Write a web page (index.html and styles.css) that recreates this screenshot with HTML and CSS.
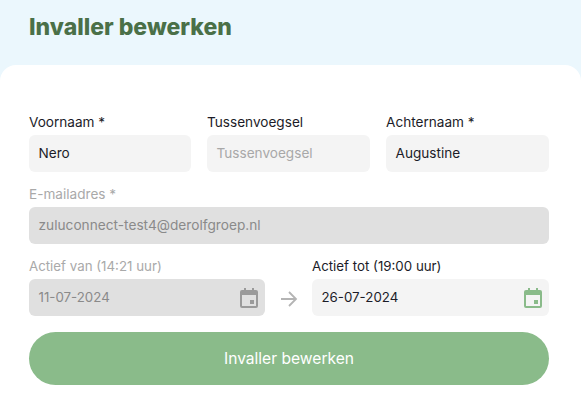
FILE: index.html
```html
<!DOCTYPE html>
<html>
<head>
  <meta charset="UTF-8">
  <title>Invaller bewerken</title>
  <link rel="stylesheet" href="styles.css">
</head>
<body>
  <header class="page-header">
    <h1>Invaller bewerken</h1>
  </header>

  <main class="card">
    <div class="row row-three">
      <div class="field">
        <label>Voornaam *</label>
        <div class="input">Nero</div>
      </div>
      <div class="field">
        <label>Tussenvoegsel</label>
        <div class="input placeholder">Tussenvoegsel</div>
      </div>
      <div class="field">
        <label>Achternaam *</label>
        <div class="input">Augustine</div>
      </div>
    </div>

    <div class="field disabled email">
      <label>E-mailadres *</label>
      <div class="input">zuluconnect-test4@derolfgroep.nl</div>
    </div>

    <div class="row row-dates">
      <div class="field disabled">
        <label>Actief van (14:21 uur)</label>
        <div class="input date">
          11-07-2024
          <svg class="calendar" viewBox="0 0 18 20"><path fill-rule="evenodd" d="M4 0h2v2h6V0h2v2h2a2 2 0 0 1 2 2v14a2 2 0 0 1-2 2H2a2 2 0 0 1-2-2V4a2 2 0 0 1 2-2h2zM2 7v11h14V7zM10 12h4v4h-4z"/></svg>
        </div>
      </div>
      <svg class="arrow" viewBox="0 0 18 16"><path d="M1 8h15M9 1l7 7-7 7"/></svg>
      <div class="field">
        <label>Actief tot (19:00 uur)</label>
        <div class="input date">
          26-07-2024
          <svg class="calendar active" viewBox="0 0 18 20"><path fill-rule="evenodd" d="M4 0h2v2h6V0h2v2h2a2 2 0 0 1 2 2v14a2 2 0 0 1-2 2H2a2 2 0 0 1-2-2V4a2 2 0 0 1 2-2h2zM2 7v11h14V7zM10 12h4v4h-4z"/></svg>
        </div>
      </div>
    </div>

    <button class="submit-btn">Invaller bewerken</button>
  </main>
</body>
</html>
```

FILE: styles.css
```css
* {
  box-sizing: border-box;
}

html, body {
  height: 100%;
}

body {
  margin: 0;
  background-color: #ebf7fd;
  font-family: Inter, "Open Sans", sans-serif;
  font-size: 13.6px;
  color: #1c1c28;
  overflow: hidden;
}

.page-header {
  height: 65px;
  padding: 14px 29px 0;
}

h1 {
  margin: 0;
  font-size: 23px;
  line-height: 27px;
  font-weight: 800;
  color: #4a7048;
}

.card {
  height: 355px;
  background-color: white;
  border-radius: 16px 16px 0 0;
  padding: 48px 32px 0 29px;
}

.row {
  display: grid;
}

.row-three {
  grid-template-columns: 162px 163px 163px;
  column-gap: 16px;
}

.row-dates {
  grid-template-columns: 236px 47px 237px;
  font-size: 13.3px;
}

.field {
  margin-bottom: 13px;
}

.email .input {
  font-size: 13.7px;
}

label {
  display: block;
  height: 22px;
  line-height: 18px;
}

.input {
  height: 37px;
  line-height: 37px;
  padding-left: 9.5px;
  border-radius: 6px;
  background-color: #f4f4f4;
}

.placeholder {
  color: #a8a8a8;
}

.disabled label {
  color: #a9a9a9;
}

.disabled .input {
  background-color: #e0e0e0;
  color: #8a8a8a;
}

.date {
  display: flex;
  justify-content: space-between;
  align-items: center;
  padding-right: 7px;
}

.calendar {
  width: 18px;
  height: 20px;
  fill: #9a9a9a;
}

.calendar.active {
  fill: #8abb8a;
}

.arrow {
  width: 18px;
  height: 16px;
  margin: 34px 0 0 15px;
  fill: none;
  stroke: #b4b4b4;
  stroke-width: 1.8;
}

.submit-btn {
  display: block;
  width: 520px;
  height: 53px;
  margin-top: 3px;
  border: none;
  border-radius: 27px;
  background-color: #8abb8a;
  color: white;
  font-family: inherit;
  font-size: 15.6px;
}
```
